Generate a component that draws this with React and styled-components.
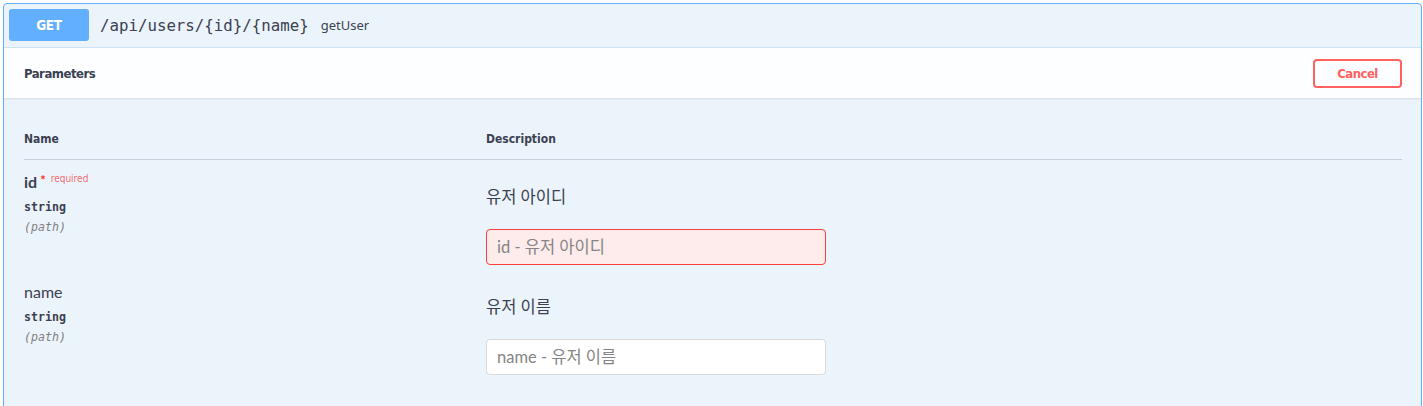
import React from 'react';
import styled, { createGlobalStyle } from 'styled-components';

const GlobalStyle = createGlobalStyle`
  html, body {
    margin: 0;
    padding: 0;
    background: #ffffff;
  }
  body {
    padding: 3px 2px 0 3px;
    font-family: "Open Sans", "Noto Sans", sans-serif;
    color: #3b4151;
  }
`;

const headFont = `"Liberation Sans Narrow", "DejaVu Sans Condensed", "Roboto", sans-serif`;
const monoFont = `"DejaVu Sans Mono", "Liberation Mono", monospace`;
const krFont = `"Lato", "Noto Sans CJK KR", sans-serif`;

const Opblock = styled.div`
  width: 1419px;
  box-sizing: border-box;
  height: 420px;
  border: 1px solid #61affe;
  border-radius: 4px;
  background: #ebf3fb;
`;

const Summary = styled.div`
  display: flex;
  align-items: center;
  padding: 5px 5px 6px;
  border-bottom: 1px solid #cfe3f6;
`;

const Method = styled.span`
  display: inline-flex;
  align-items: center;
  justify-content: center;
  width: 80px;
  height: 32px;
  border-radius: 3px;
  background: #61affe;
  color: #fff;
  font-family: ${headFont};
  font-weight: 700;
  font-size: 13.5px;
  letter-spacing: -0.3px;
`;

const Path = styled.span`
  padding: 0 11px;
  font-family: ${monoFont};
  font-size: 15.75px;
  color: #3b4151;
`;

const OpDesc = styled.span`
  margin-left: 1px;
  font-family: "Noto Sans", sans-serif;
  font-size: 13px;
  color: #3b4151;
`;

const SectionHeader = styled.div`
  display: flex;
  align-items: center;
  justify-content: space-between;
  height: 50px;
  box-sizing: border-box;
  padding: 0 19px 0 20px;
  background: rgba(255, 255, 255, 0.85);
  box-shadow: 0 1px 2px rgba(0, 0, 0, 0.1);
`;

const SectionTitle = styled.h4`
  margin: 0;
  font-family: ${headFont};
  font-size: 13px;
  letter-spacing: -0.5px;
  font-weight: 700;
  color: #3b4151;
`;

const CancelButton = styled.button`
  width: 89px;
  height: 29px;
  box-sizing: border-box;
  border: 2px solid #ff6060;
  border-radius: 4px;
  background: transparent;
  color: #ff6060;
  font-family: ${headFont};
  font-weight: 700;
  font-size: 13px;
  letter-spacing: -0.5px;
  cursor: pointer;
`;

const TableWrap = styled.div`
  padding: 22px 19px 0 20px;
`;

const Row = styled.div`
  display: grid;
  grid-template-columns: 462px 1fr;
  padding: ${p => (p.$head ? '12px 0' : '12px 0 5px')};
  border-bottom: ${p => (p.$head ? '1px solid rgba(59, 65, 81, 0.2)' : 'none')};
`;

const Th = styled.div`
  font-family: ${headFont};
  font-size: 12px;
  font-weight: 700;
  line-height: 15px;
  color: #3b4151;
`;

const NameCol = styled.div`
  display: flex;
  flex-direction: column;
`;

const ParamName = styled.div`
  height: 20px;
  font-family: ${krFont};
  font-size: 16px;
  line-height: 20px;
  font-weight: ${p => (p.$required ? 700 : 400)};
  color: #3b4151;
  span.star {
    color: #ff2a2a;
    font-size: 13px;
    line-height: 0;
    margin-left: 3px;
    position: relative;
    top: -3px;
  }
  span.req {
    font-family: ${headFont};
    font-size: 10px;
    line-height: 0;
    font-weight: 400;
    color: rgba(255, 0, 0, 0.6);
    position: relative;
    top: -6px;
    margin-left: 5px;
  }
`;

const ParamType = styled.div`
  margin-top: 5px;
  font-family: ${monoFont};
  font-size: 11.6px;
  line-height: 20px;
  font-weight: 600;
  color: #3b4151;
`;

const ParamIn = styled.div`
  font-family: ${monoFont};
  font-size: 11.6px;
  line-height: 20px;
  font-style: italic;
  color: #808080;
`;

const DescCol = styled.div`
  padding-top: 15px;
`;

const DescText = styled.div`
  font-family: ${krFont};
  font-size: 16.5px;
  line-height: 20px;
  color: #3b4151;
`;

const Input = styled.input`
  display: block;
  width: 340px;
  height: 36px;
  box-sizing: border-box;
  margin-top: 22px;
  padding: 0 10px;
  border-radius: 4px;
  border: 1px solid ${p => (p.$invalid ? '#f93e3e' : '#d9d9d9')};
  background: ${p => (p.$invalid ? '#feebeb' : '#ffffff')};
  font-family: ${krFont};
  font-size: 16.5px;
  color: #3b4151;
  outline: none;
  &::placeholder {
    color: #858585;
  }
`;

const params = [
  { name: 'id', required: true, type: 'string', in: 'path', desc: '유저 아이디' },
  { name: 'name', required: false, type: 'string', in: 'path', desc: '유저 이름' },
];

export default function App() {
  return (
    <>
      <GlobalStyle />
      <Opblock>
        <Summary>
          <Method>GET</Method>
          <Path>/api/users/{'{id}'}/{'{name}'}</Path>
          <OpDesc>getUser</OpDesc>
        </Summary>
        <SectionHeader>
          <SectionTitle>Parameters</SectionTitle>
          <CancelButton>Cancel</CancelButton>
        </SectionHeader>
        <TableWrap>
          <Row $head>
            <Th>Name</Th>
            <Th>Description</Th>
          </Row>
          {params.map(p => (
            <Row key={p.name}>
              <NameCol>
                <ParamName $required={p.required}>
                  {p.name}
                  {p.required && <span className="star">*</span>}
                  {p.required && <span className="req">required</span>}
                </ParamName>
                <ParamType>{p.type}</ParamType>
                <ParamIn>({p.in})</ParamIn>
              </NameCol>
              <DescCol>
                <DescText>{p.desc}</DescText>
                <Input $invalid={p.required} placeholder={`${p.name} - ${p.desc}`} />
              </DescCol>
            </Row>
          ))}
        </TableWrap>
      </Opblock>
    </>
  );
}
